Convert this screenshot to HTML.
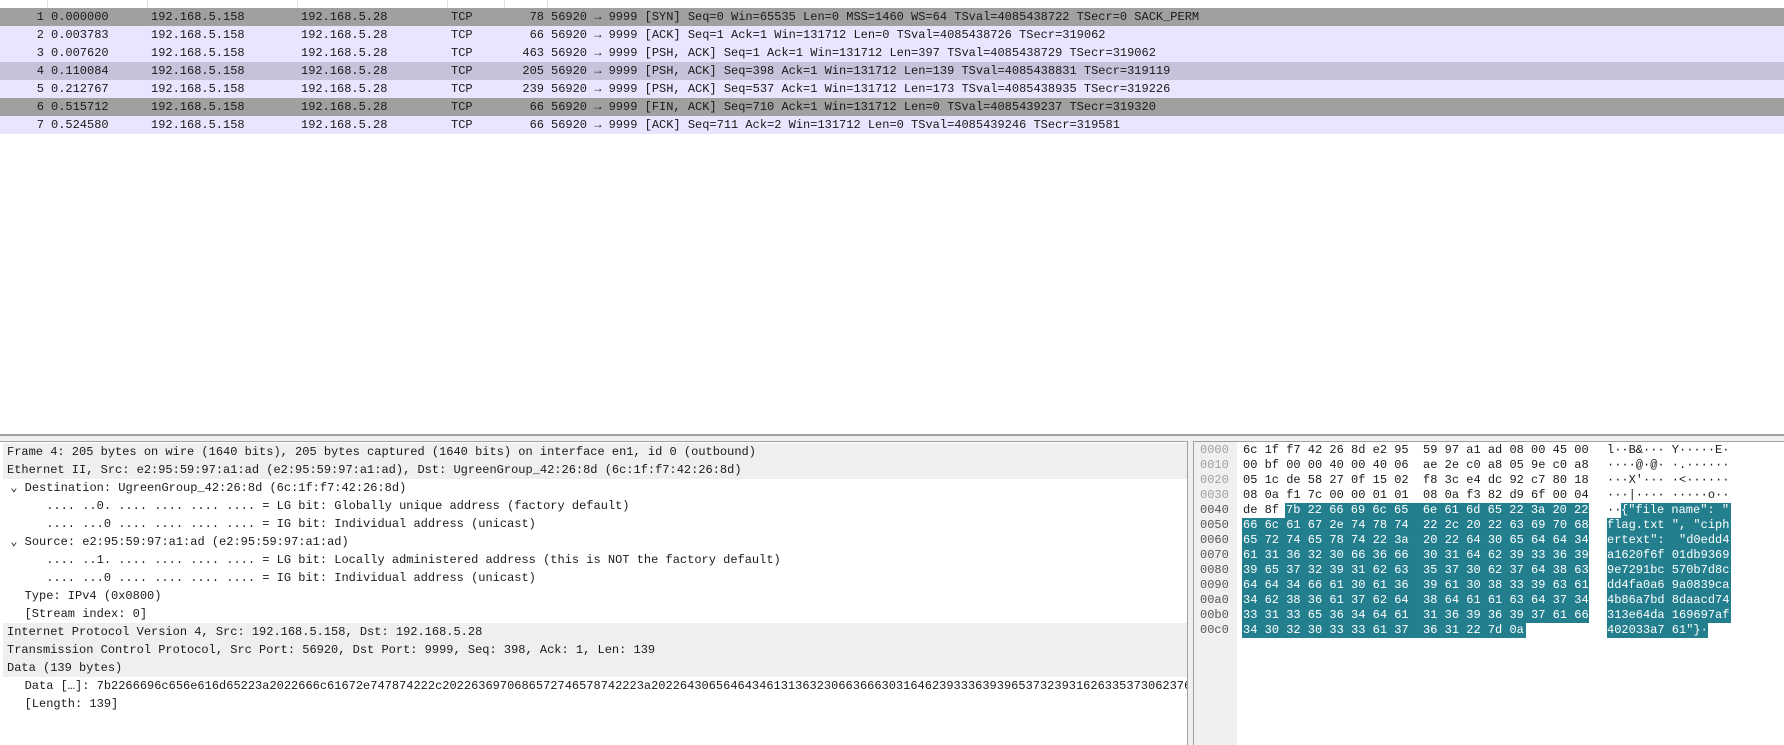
<!DOCTYPE html>
<html><head><meta charset="utf-8"><style>
*{margin:0;padding:0;box-sizing:border-box}
body{width:1784px;height:745px;background:#fff;position:relative;overflow:hidden;font-family:"Liberation Mono",monospace;font-size:12px;color:#1a1a1a}
.a{position:absolute;white-space:pre}
.r{position:absolute;left:0;width:1784px;height:18px;line-height:18px}
.g{background:#a0a0a0}.l{background:#e7e6fe}.s{background:#c5c3d9}
.c{position:absolute;top:0;white-space:pre}
.d{position:absolute;left:3px;width:1184px;height:18px;line-height:18px;white-space:pre;overflow:hidden}
.gb{background:#efefef;padding-left:4px}
.h{position:absolute;height:15px;line-height:15px;white-space:pre}
.off{left:1200px;color:#a0a0a0}
.off2{left:1200px;color:#555}
.t{background:#237f8e;color:#fff}
.hx{left:1242px;padding-left:1px;width:347px}
.as{left:1607px;width:124px}
</style></head><body>
<div class="a" style="left:47px;top:0;width:1px;height:8px;background:#e0e0e0"></div>
<div class="a" style="left:147px;top:0;width:1px;height:8px;background:#e0e0e0"></div>
<div class="a" style="left:297px;top:0;width:1px;height:8px;background:#e0e0e0"></div>
<div class="a" style="left:447px;top:0;width:1px;height:8px;background:#e0e0e0"></div>
<div class="a" style="left:504px;top:0;width:1px;height:8px;background:#e0e0e0"></div>
<div class="a" style="left:547px;top:0;width:1px;height:8px;background:#e0e0e0"></div>

<div class="r g" style="top:8px"><span class="c" style="right:1740px">1</span><span class="c" style="left:51px">0.000000</span><span class="c" style="left:151px">192.168.5.158</span><span class="c" style="left:301px">192.168.5.28</span><span class="c" style="left:451px">TCP</span><span class="c" style="right:1240px">78</span><span class="c" style="left:551px">56920 → 9999 [SYN] Seq=0 Win=65535 Len=0 MSS=1460 WS=64 TSval=4085438722 TSecr=0 SACK_PERM</span></div>
<div class="r l" style="top:26px"><span class="c" style="right:1740px">2</span><span class="c" style="left:51px">0.003783</span><span class="c" style="left:151px">192.168.5.158</span><span class="c" style="left:301px">192.168.5.28</span><span class="c" style="left:451px">TCP</span><span class="c" style="right:1240px">66</span><span class="c" style="left:551px">56920 → 9999 [ACK] Seq=1 Ack=1 Win=131712 Len=0 TSval=4085438726 TSecr=319062</span></div>
<div class="r l" style="top:44px"><span class="c" style="right:1740px">3</span><span class="c" style="left:51px">0.007620</span><span class="c" style="left:151px">192.168.5.158</span><span class="c" style="left:301px">192.168.5.28</span><span class="c" style="left:451px">TCP</span><span class="c" style="right:1240px">463</span><span class="c" style="left:551px">56920 → 9999 [PSH, ACK] Seq=1 Ack=1 Win=131712 Len=397 TSval=4085438729 TSecr=319062</span></div>
<div class="r s" style="top:62px"><span class="c" style="right:1740px">4</span><span class="c" style="left:51px">0.110084</span><span class="c" style="left:151px">192.168.5.158</span><span class="c" style="left:301px">192.168.5.28</span><span class="c" style="left:451px">TCP</span><span class="c" style="right:1240px">205</span><span class="c" style="left:551px">56920 → 9999 [PSH, ACK] Seq=398 Ack=1 Win=131712 Len=139 TSval=4085438831 TSecr=319119</span></div>
<div class="r l" style="top:80px"><span class="c" style="right:1740px">5</span><span class="c" style="left:51px">0.212767</span><span class="c" style="left:151px">192.168.5.158</span><span class="c" style="left:301px">192.168.5.28</span><span class="c" style="left:451px">TCP</span><span class="c" style="right:1240px">239</span><span class="c" style="left:551px">56920 → 9999 [PSH, ACK] Seq=537 Ack=1 Win=131712 Len=173 TSval=4085438935 TSecr=319226</span></div>
<div class="r g" style="top:98px"><span class="c" style="right:1740px">6</span><span class="c" style="left:51px">0.515712</span><span class="c" style="left:151px">192.168.5.158</span><span class="c" style="left:301px">192.168.5.28</span><span class="c" style="left:451px">TCP</span><span class="c" style="right:1240px">66</span><span class="c" style="left:551px">56920 → 9999 [FIN, ACK] Seq=710 Ack=1 Win=131712 Len=0 TSval=4085439237 TSecr=319320</span></div>
<div class="r l" style="top:116px"><span class="c" style="right:1740px">7</span><span class="c" style="left:51px">0.524580</span><span class="c" style="left:151px">192.168.5.158</span><span class="c" style="left:301px">192.168.5.28</span><span class="c" style="left:451px">TCP</span><span class="c" style="right:1240px">66</span><span class="c" style="left:551px">56920 → 9999 [ACK] Seq=711 Ack=2 Win=131712 Len=0 TSval=4085439246 TSecr=319581</span></div>

<div class="a" style="left:0;top:434px;width:1784px;height:2px;background:#a0a0a0"></div>
<div class="a" style="left:0;top:436px;width:1784px;height:5px;background:#f0f0f0"></div>
<div class="a" style="left:0;top:441px;width:1188px;height:304px;border-top:1px solid #a0a0a0;border-right:1px solid #a0a0a0"></div>
<div class="a" style="left:1188px;top:436px;width:5px;height:309px;background:#f0f0f0"></div>
<div class="a" style="left:1193px;top:441px;width:591px;height:304px;border-top:1px solid #a0a0a0;border-left:1px solid #a0a0a0"></div>
<div class="a" style="left:1194px;top:442px;width:43px;height:303px;background:#f0f0f0"></div>

<div class="d gb" style="top:443px">Frame 4: 205 bytes on wire (1640 bits), 205 bytes captured (1640 bits) on interface en1, id 0 (outbound)</div>
<div class="d gb" style="top:461px">Ethernet II, Src: e2:95:59:97:a1:ad (e2:95:59:97:a1:ad), Dst: UgreenGroup_42:26:8d (6c:1f:f7:42:26:8d)</div>
<div class="d" style="top:479px"> ⌄ Destination: UgreenGroup_42:26:8d (6c:1f:f7:42:26:8d)</div>
<div class="d" style="top:497px">      .... ..0. .... .... .... .... = LG bit: Globally unique address (factory default)</div>
<div class="d" style="top:515px">      .... ...0 .... .... .... .... = IG bit: Individual address (unicast)</div>
<div class="d" style="top:533px"> ⌄ Source: e2:95:59:97:a1:ad (e2:95:59:97:a1:ad)</div>
<div class="d" style="top:551px">      .... ..1. .... .... .... .... = LG bit: Locally administered address (this is NOT the factory default)</div>
<div class="d" style="top:569px">      .... ...0 .... .... .... .... = IG bit: Individual address (unicast)</div>
<div class="d" style="top:587px">   Type: IPv4 (0x0800)</div>
<div class="d" style="top:605px">   [Stream index: 0]</div>
<div class="d gb" style="top:623px">Internet Protocol Version 4, Src: 192.168.5.158, Dst: 192.168.5.28</div>
<div class="d gb" style="top:641px">Transmission Control Protocol, Src Port: 56920, Dst Port: 9999, Seq: 398, Ack: 1, Len: 139</div>
<div class="d gb" style="top:659px">Data (139 bytes)</div>
<div class="d" style="top:677px">   Data […]: 7b2266696c656e616d65223a2022666c61672e747874222c2022636970686572746578742223a20226430656464346131363230663666303164623933363939653732393162633537306237643863646434666130613639613038333963613462383661376264386461616364373433313365363464613136393639376166343032303333613736312227d0a</div>
<div class="d" style="top:695px">   [Length: 139]</div>

<div class="h off" style="top:443px">0000</div><div class="h" style="left:1243px;top:443px">6c 1f f7 42 26 8d e2 95  59 97 a1 ad 08 00 45 00</div>
<div class="h off" style="top:458px">0010</div><div class="h" style="left:1243px;top:458px">00 bf 00 00 40 00 40 06  ae 2e c0 a8 05 9e c0 a8</div>
<div class="h off" style="top:473px">0020</div><div class="h" style="left:1243px;top:473px">05 1c de 58 27 0f 15 02  f8 3c e4 dc 92 c7 80 18</div>
<div class="h off" style="top:488px">0030</div><div class="h" style="left:1243px;top:488px">08 0a f1 7c 00 00 01 01  08 0a f3 82 d9 6f 00 04</div>
<div class="h off2" style="top:503px">0040</div><div class="h" style="left:1243px;top:503px">de 8f</div><div class="h t" style="left:1285px;top:503px;width:304px;padding-left:1px">7b 22 66 69 6c 65  6e 61 6d 65 22 3a 20 22</div>
<div class="h off2" style="top:518px">0050</div><div class="h t hx" style="top:518px">66 6c 61 67 2e 74 78 74  22 2c 20 22 63 69 70 68</div>
<div class="h off2" style="top:533px">0060</div><div class="h t hx" style="top:533px">65 72 74 65 78 74 22 3a  20 22 64 30 65 64 64 34</div>
<div class="h off2" style="top:548px">0070</div><div class="h t hx" style="top:548px">61 31 36 32 30 66 36 66  30 31 64 62 39 33 36 39</div>
<div class="h off2" style="top:563px">0080</div><div class="h t hx" style="top:563px">39 65 37 32 39 31 62 63  35 37 30 62 37 64 38 63</div>
<div class="h off2" style="top:578px">0090</div><div class="h t hx" style="top:578px">64 64 34 66 61 30 61 36  39 61 30 38 33 39 63 61</div>
<div class="h off2" style="top:593px">00a0</div><div class="h t hx" style="top:593px">34 62 38 36 61 37 62 64  38 64 61 61 63 64 37 34</div>
<div class="h off2" style="top:608px">00b0</div><div class="h t hx" style="top:608px">33 31 33 65 36 34 64 61  31 36 39 36 39 37 61 66</div>
<div class="h off2" style="top:623px">00c0</div><div class="h t" style="left:1242px;padding-left:1px;top:623px;width:284px">34 30 32 30 33 33 61 37  36 31 22 7d 0a</div>

<div class="h" style="left:1607px;top:443px">l··B&amp;··· Y·····E·</div>
<div class="h" style="left:1607px;top:458px">····@·@· ·.······</div>
<div class="h" style="left:1607px;top:473px">···X'··· ·&lt;······</div>
<div class="h" style="left:1607px;top:488px">···|···· ·····o··</div>
<div class="h" style="left:1607px;top:503px">··</div><div class="h t" style="left:1621px;top:503px;width:110px">{"file name": "</div>
<div class="h t as" style="top:518px">flag.txt ", "ciph</div>
<div class="h t as" style="top:533px">ertext":  "d0edd4</div>
<div class="h t as" style="top:548px">a1620f6f 01db9369</div>
<div class="h t as" style="top:563px">9e7291bc 570b7d8c</div>
<div class="h t as" style="top:578px">dd4fa0a6 9a0839ca</div>
<div class="h t as" style="top:593px">4b86a7bd 8daacd74</div>
<div class="h t as" style="top:608px">313e64da 169697af</div>
<div class="h t" style="left:1607px;top:623px;width:101px">402033a7 61"}·</div>
</body></html>
